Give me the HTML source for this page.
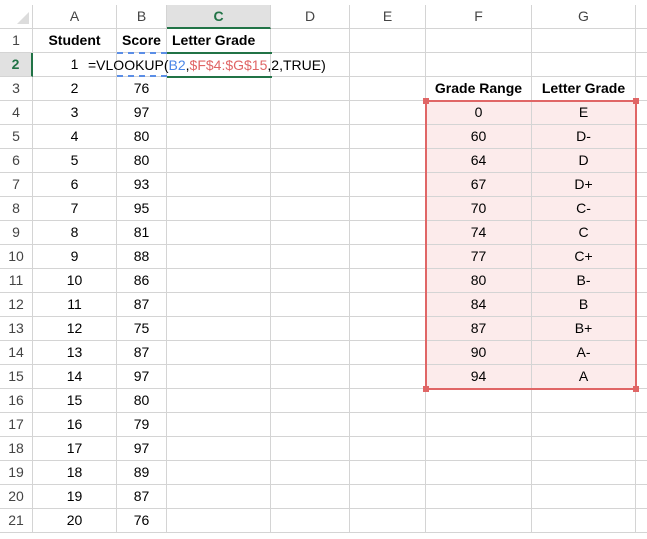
<!DOCTYPE html><html><head><style>
body{margin:0;width:647px;height:539px;overflow:hidden;background:#fff;font-family:"Liberation Sans",sans-serif;font-size:14px;color:#000;position:relative}
.c{position:absolute;box-sizing:border-box;border-right:1px solid #d4d4d4;border-bottom:1px solid #d4d4d4;text-align:center;line-height:23px;height:24px;white-space:nowrap}
.h{color:#444;font-size:14px}
</style></head><body>
<div id="g"></div>
<script>
var xs=[0,33,117,167,271,350,426,532,636,660];
var cols=["","A","B","C","D","E","F","G",""];
var A=["Student","1","2","3","4","5","6","7","8","9","10","11","12","13","14","15","16","17","18","19","20"];
var B=["Score","","76","97","80","80","93","95","81","88","86","87","75","87","97","80","79","97","89","87","76"];
var F=["","","","Grade Range","0","60","64","67","70","74","77","80","84","87","90","94"];
var G=["","","","Letter Grade","E","D-","D","D+","C-","C","C+","B-","B","B+","A-","A"];
var h="";
for(var i=0;i<9;i++){var bg=i==3?"background:#e1e1e1;border-bottom:2px solid #217346;color:#217346;font-weight:bold;":"";
h+='<div class="c h" style="left:'+xs[i]+'px;top:5px;width:'+(xs[i+1]-xs[i])+'px;height:24px;'+bg+'">'+cols[i]+'</div>';}
for(var r=1;r<=21;r++){var y=29+(r-1)*24;
var rb=r==2?"background:#e1e1e1;border-right:2px solid #217346;color:#217346;font-weight:bold;":"";
h+='<div class="c h" style="left:0;top:'+y+'px;width:33px;'+rb+'">'+r+'</div>';
for(var i=1;i<9;i++){var t="",st="";
if(i==1)t=A[r-1];if(i==2)t=B[r-1];if(i==6)t=F[r]||"";if(i==7)t=G[r]||"";
if(r==1&&i==3)t="Letter Grade";
if(r==1||(r==3&&(i==6||i==7)))st+="font-weight:bold;";
if(r==1&&i==3)st+="text-align:left;padding-left:5px;";
if(r>=4&&r<=15&&(i==6||i==7))st+="background:#fcebeb;";
h+='<div class="c" style="left:'+xs[i]+'px;top:'+y+'px;width:'+(xs[i+1]-xs[i])+'px;'+st+'">'+t+'</div>';}}
document.getElementById("g").innerHTML=h;
</script>
<div style="position:absolute;left:88px;top:53px;line-height:24px;font-size:14px;white-space:nowrap">=VLOOKUP(<span style="color:#4a86e8">B2</span>,<span style="color:#e06666">$F$4:$G$15</span>,2,TRUE)</div>
<div style="position:absolute;left:117px;top:52px;width:50px;height:25px;box-sizing:border-box;border-top:2px dashed #5b8ee6;border-bottom:2px dashed #5b8ee6"></div>
<div style="position:absolute;left:167px;top:52px;width:105px;height:26px;box-sizing:border-box;border-top:2px solid #217346;border-bottom:2px solid #217346"></div>
<div style="position:absolute;left:425px;top:100px;width:212px;height:290px;box-sizing:border-box;border:2px solid #e06666"></div>
<div style="position:absolute;left:423px;top:98px;width:6px;height:6px;background:#e06666"></div>
<div style="position:absolute;left:633px;top:98px;width:6px;height:6px;background:#e06666"></div>
<div style="position:absolute;left:423px;top:386px;width:6px;height:6px;background:#e06666"></div>
<div style="position:absolute;left:633px;top:386px;width:6px;height:6px;background:#e06666"></div>
<div style="position:absolute;left:0;top:0;width:647px;height:5px;background:#fff"></div>
<div style="position:absolute;left:17px;top:12px;width:0;height:0;border-left:12px solid transparent;border-bottom:12px solid #dcdcdc"></div>
</body></html>
